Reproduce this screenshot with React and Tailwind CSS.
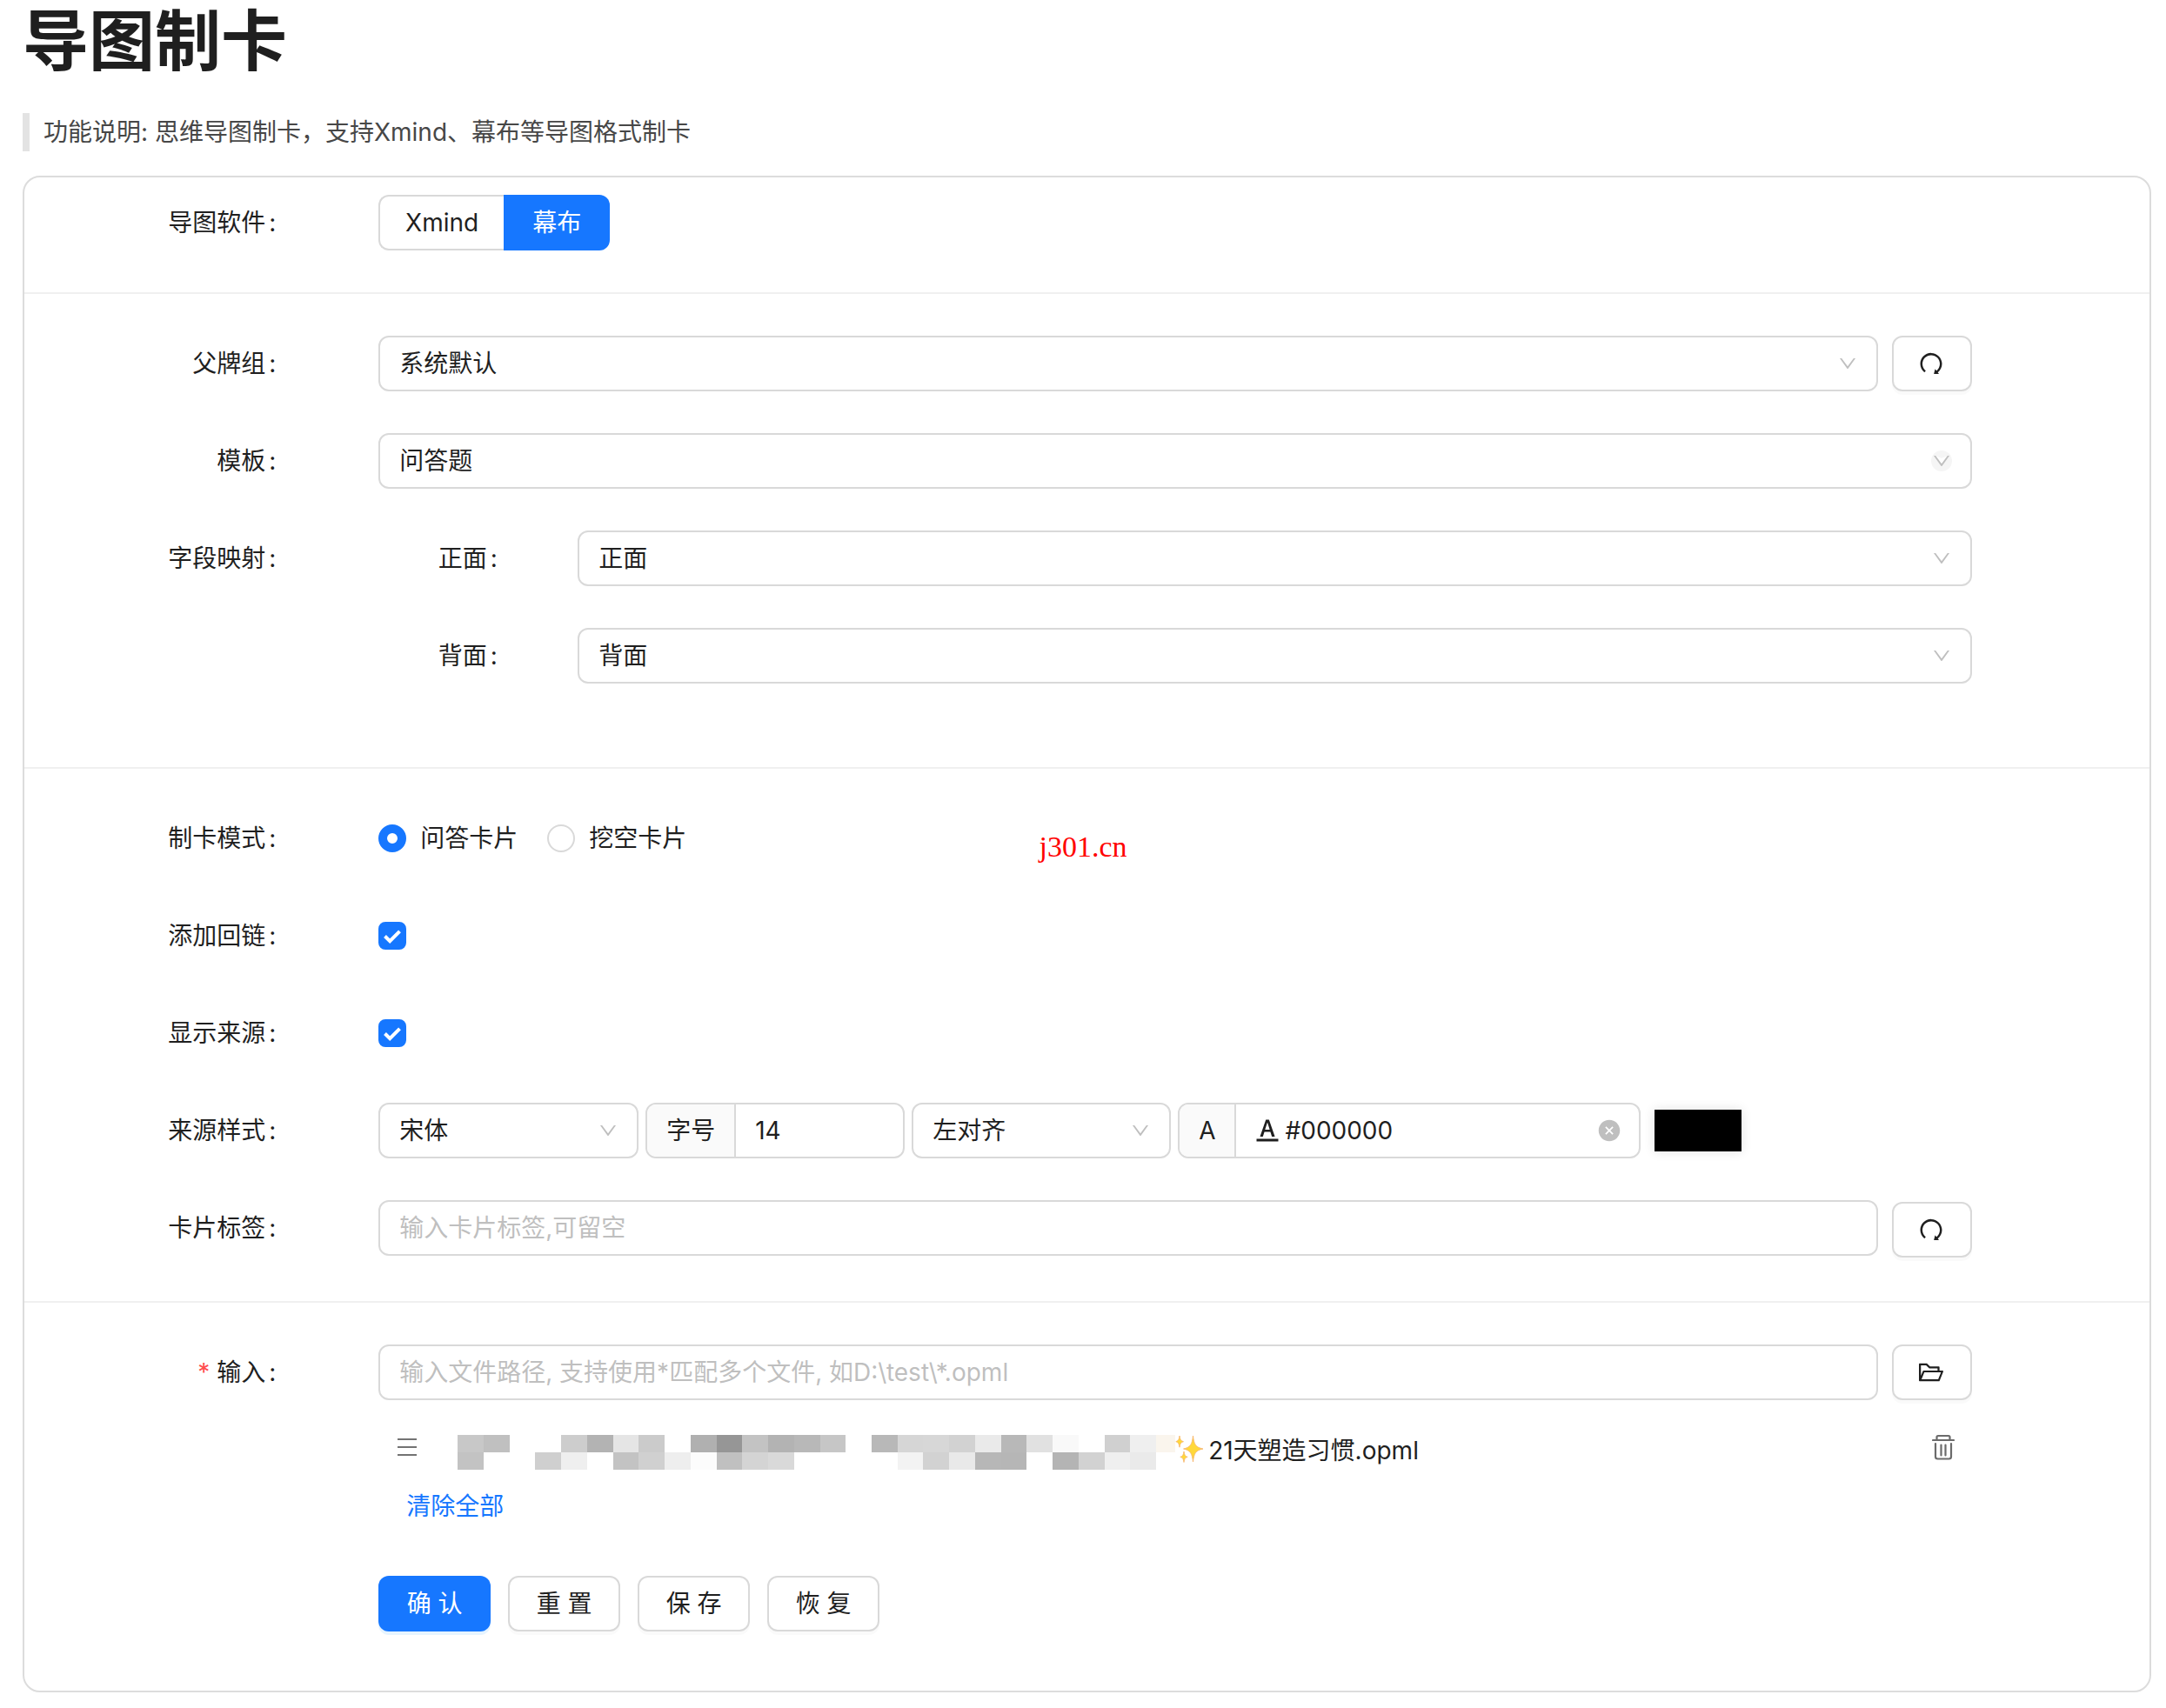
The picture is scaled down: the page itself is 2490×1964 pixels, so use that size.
import React from "react";
import {
  AiFillCloseCircle,
  AiOutlineDown,
  AiOutlineFolderOpen,
  AiOutlineFontColors,
  AiOutlineRedo,
} from "react-icons/ai";

const control =
  "h-16 rounded-xl border-2 border-[#d9d9d9] bg-white text-[28px] leading-9 text-[#1f1f1f] outline-none";
const buttonShadow = "shadow-[0_4px_0_rgba(0,0,0,0.02)]";

function Row({ label, htmlFor, required, children }) {
  return (
    <div className="grid grid-cols-[3fr_1fr_18fr_2fr]">
      <FieldLabel htmlFor={htmlFor} required={required}>{label}</FieldLabel>
      <div className="col-start-3 min-w-0">{children}</div>
    </div>
  );
}

function FieldLabel({ htmlFor, required, children }) {
  return (
    <label htmlFor={htmlFor} className="flex h-16 items-center justify-end whitespace-nowrap">
      {required && <span className="mr-2 text-[#ff4d4f]">*</span>}
      {children}
      <span className="ml-1 mr-4">:</span>
    </label>
  );
}

function Select({ id, value, label, className = "", clearable }) {
  return (
    <div className={`relative ${className}`}>
      <select
        id={id}
        aria-label={label}
        defaultValue={value}
        className={`${control} w-full appearance-none pl-[22px] pr-14`}
      >
        <option>{value}</option>
      </select>
      <span
        className={`pointer-events-none absolute inset-y-0 right-[23px] my-auto flex size-6 items-center justify-center rounded-full text-[#bfbfbf] ${clearable ? "bg-[#f5f5f5]" : ""}`}
      >
        {clearable && (
          <svg viewBox="0 0 24 24" className="absolute size-6" fill="#fff" aria-hidden="true">
            <path d="M5 6 12 15.500 19 6 12 9Z" />
          </svg>
        )}
        <AiOutlineDown className="relative size-6" />
      </span>
    </div>
  );
}

function IconButton({ label, children }) {
  return (
    <button
      type="button"
      aria-label={label}
      className={`${control} ${buttonShadow} flex w-[92px] shrink-0 items-center justify-center pr-0.5`}
    >
      {children}
    </button>
  );
}

function Checkbox({ id }) {
  return (
    <div className="flex h-16 items-center">
      <span className="relative size-8">
        <input
          id={id}
          type="checkbox"
          defaultChecked
          className="peer block size-8 appearance-none rounded-lg border-2 border-[#d9d9d9] checked:border-[#1677ff] checked:bg-[#1677ff]"
        />
        <svg
          viewBox="0 0 32 32"
          fill="none"
          stroke="#fff"
          strokeWidth="4"
          className="pointer-events-none absolute inset-0 hidden peer-checked:block"
        >
          <path d="M7.5 16.5 13.2 22.2 24.5 10.8" />
        </svg>
      </span>
    </div>
  );
}

function Radio({ label, checked }) {
  return (
    <label className="flex items-center gap-4">
      <input
        type="radio"
        name="mode"
        defaultChecked={checked}
        className="size-8 appearance-none rounded-full border-2 border-[#d9d9d9] bg-white checked:border-[10px] checked:border-[#1677ff]"
      />
      {label}
    </label>
  );
}

const mosaic = [
  ["#c8c8c8", "#c0c0c0", "", "", "#cdcdcd", "#b3b3b3", "#e5e5e5", "#cbcbcb", "", "#b0b0b0", "#969696", "#c3c3c3", "#b3b3b3", "#b8b8b8", "#c6c6c6", "", "#b8b8b8", "#d6d6d6", "#d7d7d7", "#d2d2d2", "#eaeaea", "#b8b8b8", "#e1e1e1", "#f9f9f9", "", "#d0d0d0", "#efefef", "#faf5ed"],
  ["#c3c3c3", "", "", "#cfcfcf", "#efefef", "", "#c3c3c3", "#d0d0d0", "#eeeeee", "#fcfcfc", "#c0c0c0", "#d4d4d4", "#d9d9d9", "", "", "", "", "#f3f3f3", "#d2d2d2", "#e9e9e9", "#b7b7b7", "#b6b6b6", "", "#b4b4b4", "#d2d2d2", "#efefef", "#eaeaea", ""],
];

function Mosaic() {
  return (
    <div
      aria-hidden="true"
      className="grid h-10 w-[825px] shrink-0 grid-cols-[repeat(27,minmax(0,1fr))_22px] grid-rows-2"
    >
      {mosaic.flat().map((color, i) => (
        <span key={i} style={{ backgroundColor: color || "transparent" }} />
      ))}
    </div>
  );
}

function Sparkles() {
  return (
    <svg viewBox="0 0 34 32" className="h-8 w-[34px] shrink-0" fill="#ffd83a" stroke="#f6b26b" strokeWidth="0.8" aria-hidden="true">
      <path d="M20.5 1C21.6 10.5 23.2 14.2 32 16C23.2 17.8 21.6 21.5 20.5 31C19.4 21.5 17.8 17.8 9.5 16C17.8 14.2 19.4 10.5 20.5 1Z" />
      <path d="M5 1C5.6 5.2 6.4 6.8 9.5 7.7C6.4 8.6 5.6 10.2 5 14.2C4.4 10.2 3.6 8.6 .8 7.7C3.6 6.8 4.4 5.2 5 1Z" />
      <path d="M10 19C10.6 23 11.4 24.5 14.2 25.3C11.4 26.1 10.6 27.6 10 31.5C9.4 27.6 8.6 26.1 5.8 25.3C8.6 24.5 9.4 23 10 19Z" />
    </svg>
  );
}

function MenuIcon() {
  return (
    <svg viewBox="0 0 22 22" className="size-[22px]" stroke="#737373" strokeWidth="2" aria-hidden="true">
      <path d="M0 2h22M0 11h22M0 20h22" />
    </svg>
  );
}

function TrashIcon() {
  return (
    <svg viewBox="0 0 26 30" className="h-[30px] w-[26px]" fill="none" stroke="#6b6b6b" strokeWidth="2.2" strokeLinecap="round" aria-hidden="true">
      <path d="M1 7h24M5.5 6.5V3.5Q5.5 2 7 2H19Q20.500 2 20.500 3.500V6.500" />
      <path d="M4 11V26Q4 28.500 6.500 28.500H19.500Q22 28.500 22 26V11M10.500 12.500V24.500M15.500 12.500V24.500" />
    </svg>
  );
}

function Divider() {
  return <hr className="my-12 border-0 border-t-2 border-[#f0f0f0]" />;
}

export default function App() {
  return (
    <main className="relative bg-white pb-[18px] pl-[26px] pr-[17px] font-['Inter','Noto_Sans_CJK_SC',sans-serif] text-[28px] leading-9 text-[#1f1f1f]">
      <h1 className="text-[76px] font-bold leading-[94px]">导图制卡</h1>
      <blockquote className="mt-9 border-l-8 border-[#e3e3e3] pl-4 leading-[44px] text-[#474747]">
        功能说明: 思维导图制卡，支持Xmind、幕布等导图格式制卡
      </blockquote>

      <form className="mt-7 rounded-[20px] border-2 border-[#dcdcdc] py-5">
        <Row label="导图软件">
          <div className="flex">
            <button type="button" className="h-16 w-36 rounded-l-xl border-2 border-r-0 border-[#d9d9d9]">
              Xmind
            </button>
            <button type="button" className="h-16 w-[122px] rounded-r-xl bg-[#1677ff] text-white">
              幕布
            </button>
          </div>
        </Row>

        <Divider />

        <div className="flex flex-col gap-12">
          <Row label="父牌组" htmlFor="deck">
            <div className="flex gap-4">
              <Select id="deck" value="系统默认" className="grow" />
              <IconButton label="刷新牌组"><AiOutlineRedo className="size-8" /></IconButton>
            </div>
          </Row>
          <Row label="模板" htmlFor="template">
            <Select id="template" value="问答题" clearable />
          </Row>
          <Row label="字段映射">
            <div className="flex flex-col gap-12">
              {["正面", "背面"].map((name) => (
                <div key={name} className="grid grid-cols-[2fr_1fr_21fr]">
                  <FieldLabel htmlFor={name}>{name}</FieldLabel>
                  <Select id={name} value={name} className="col-start-3" />
                </div>
              ))}
            </div>
          </Row>
        </div>

        <hr className="mb-12 mt-24 border-0 border-t-2 border-[#f0f0f0]" />

        <div className="flex flex-col gap-12">
          <Row label="制卡模式">
            <div className="flex h-16 items-center gap-[34px]">
              <Radio label="问答卡片" checked />
              <Radio label="挖空卡片" />
            </div>
          </Row>
          <Row label="添加回链" htmlFor="backlink">
            <Checkbox id="backlink" />
          </Row>
          <Row label="显示来源" htmlFor="source">
            <Checkbox id="source" />
          </Row>
          <Row label="来源样式">
            <div className="flex items-center gap-2">
              <Select label="字体" value="宋体" className="w-[299px]" />
              <div className={`${control} flex w-[298px] overflow-hidden`}>
                <label htmlFor="size" className="flex shrink-0 items-center border-r-2 border-[#d9d9d9] bg-[#fafafa] px-[22px]">字号</label>
                <input id="size" defaultValue="14" className="w-full min-w-0 px-[22px] outline-none" />
              </div>
              <Select label="对齐方式" value="左对齐" className="w-[298px]" />
              <div className={`${control} flex w-[532px] items-center overflow-hidden`}>
                <label htmlFor="color" className="flex shrink-0 items-center self-stretch border-r-2 border-[#d9d9d9] bg-[#fafafa] px-[22px]">A</label>
                <AiOutlineFontColors className="ml-5 size-8 shrink-0" />
                <input id="color" defaultValue="#000000" className="ml-1 w-full min-w-0 outline-none" />
                <button type="button" aria-label="清除颜色" className="mr-5 text-[#bfbfbf]">
                  <AiFillCloseCircle className="size-7" />
                </button>
              </div>
              <button type="button" aria-label="选择颜色" className="ml-2 h-12 w-[100px] bg-black shadow-[0_0_12px_rgba(0,0,0,0.12)]" />
            </div>
          </Row>
          <Row label="卡片标签" htmlFor="tags">
            <div className="flex gap-4 pb-1">
              <input id="tags" placeholder="输入卡片标签,可留空" className={`${control} min-w-0 grow px-[22px] placeholder:text-[#bfbfbf]`} />
              <div className="-mb-1 pt-0.5">
                <IconButton label="刷新标签"><AiOutlineRedo className="size-8" /></IconButton>
              </div>
            </div>
          </Row>
        </div>

        <Divider />

        <Row label="输入" htmlFor="path" required>
          <div className="flex gap-4">
            <input
              id="path"
              placeholder="输入文件路径, 支持使用*匹配多个文件, 如D:\test\*.opml"
              className={`${control} min-w-0 grow px-[22px] placeholder:text-[#bfbfbf]`}
            />
            <IconButton label="选择文件"><AiOutlineFolderOpen className="size-8" /></IconButton>
          </div>
          <div className="mt-8 flex h-12 items-start pl-[22px] pr-5">
            <span className="mr-[47px] flex h-11 items-center"><MenuIcon /></span>
            <div className="mt-2 flex grow items-start">
              <Mosaic />
              <Sparkles />
              <span className="ml-1">21天塑造习惯.opml</span>
            </div>
            <button type="button" aria-label="删除文件" className="flex h-11 items-center"><TrashIcon /></button>
          </div>
          <button type="button" className="mt-2.5 block h-16 px-8 text-[#1677ff]">清除全部</button>
          <div className="mb-12 mt-12 flex gap-5">
            <button type="submit" className="h-16 w-[129px] rounded-xl bg-[#1677ff] text-white shadow-[0_4px_0_rgba(5,145,255,0.1)]">确 认</button>
            {["重 置", "保 存", "恢 复"].map((text) => (
              <button key={text} type="button" className={`${control} ${buttonShadow} w-[129px]`}>{text}</button>
            ))}
          </div>
        </Row>
      </form>

      <div className="pointer-events-none absolute left-1/2 top-[952px] -translate-x-1/2 font-['Liberation_Serif',serif] text-[34px] leading-[44px] text-[#ff0000]">
        j301.cn
      </div>
    </main>
  );
}
